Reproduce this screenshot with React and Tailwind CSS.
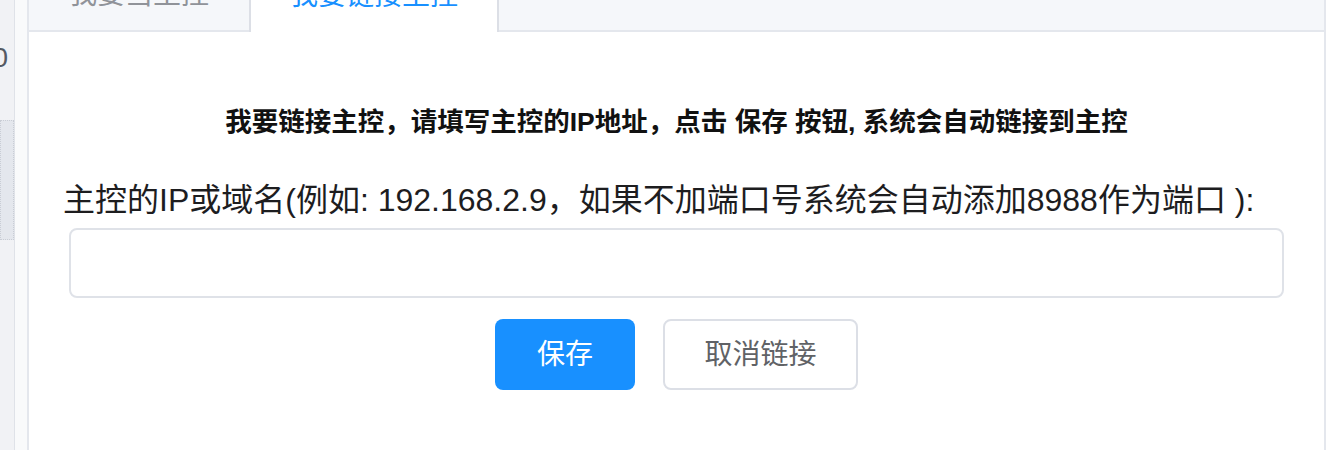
import React, { useState } from 'react';

const FONT = { fontFamily: '"Liberation Sans", "Noto Sans CJK SC", sans-serif' };

export default function App() {
  const [host, setHost] = useState('');

  return (
    <div className="flex h-[450px] w-[1326px] overflow-hidden bg-white" style={FONT}>
      {/* left side strip (cut off) */}
      <div className="flex w-[15px] shrink-0 flex-col border-r border-[#dfe2e8] bg-[#f1f2f5]">
        <div className="flex h-[120px] justify-end overflow-hidden pt-[42px] pr-[6px]">
          <span className="whitespace-nowrap text-[28px] leading-[32px] text-[#555a63]">40</span>
        </div>
        <div className="h-[120px] border border-dotted border-[#c9cdd5] bg-[#e4e7ed]" />
        <div className="flex-1" />
      </div>
      <div className="w-[12px] shrink-0 bg-[#f9fafb]" />

      {/* card */}
      <div className="flex flex-1 flex-col border-x-2 border-[#e4e7ed] -mt-[40px]">
        {/* tabs */}
        <div className="flex h-[72px] shrink-0 border-b-2 border-[#e4e7ed] bg-[#f5f7fa]">
          <div className="flex w-[220px] items-center justify-center text-[28px] text-[#909399]">我要当主控</div>
          <div className="-mb-[2px] flex w-[250px] items-center justify-center border-x-2 border-[#dcdfe6] bg-white text-[28px] text-[#1890ff]">
            我要链接主控
          </div>
        </div>

        {/* body */}
        <div className="flex flex-col pt-[76px]">
          <p className="text-center text-[26.5px] font-bold leading-[28px] text-[#111]">
            我要链接主控，请填写主控的IP地址，点击 保存 按钮, 系统会自动链接到主控
          </p>
          <label className="mt-[48px] pl-[34px] text-[32px] leading-[32px] text-[#1d1d1f]">
            主控的IP或域名(例如: 192.168.2.9，如果不加端口号系统会自动添加8988作为端口 ):
          </label>
          <div className="mt-[12px] px-[40px]">
            <input
              value={host}
              onChange={(e) => setHost(e.target.value)}
              className="h-[70px] w-full rounded-[8px] border-2 border-[#dfe2e8] px-4 text-[28px] outline-none"
            />
          </div>
          <div className="mt-[21px] flex justify-center gap-[28px]">
            <button className="h-[71px] w-[140px] rounded-[8px] bg-[#1890ff] text-[28px] text-white">保存</button>
            <button className="h-[71px] w-[195px] rounded-[8px] border-2 border-[#dcdfe6] bg-white text-[28px] text-[#606266]">
              取消链接
            </button>
          </div>
        </div>
      </div>
    </div>
  );
}
